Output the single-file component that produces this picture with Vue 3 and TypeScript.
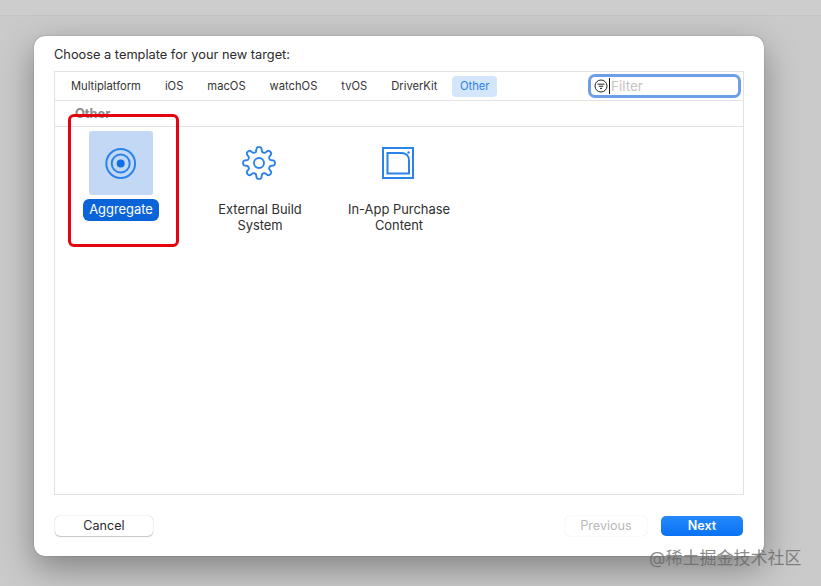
<script setup lang="ts">
const platforms = ['Multiplatform', 'iOS', 'macOS', 'watchOS', 'tvOS', 'DriverKit', 'Other'];
const templates = [
  { name: 'Aggregate', lines: ['Aggregate'], icon: 'target' },
  { name: 'External Build System', lines: ['External Build', 'System'], icon: 'gear' },
  { name: 'In-App Purchase Content', lines: ['In-App Purchase', 'Content'], icon: 'box' },
];
const selected = 'Aggregate';

// outline of the gear: 8 rounded teeth around the centre
const gearPath = (() => {
  const pts: string[] = [];
  for (let i = 0; i < 240; i++) {
    const a = (i / 240) * Math.PI * 2;
    const r = 13.6 + 2.3 * (Math.tanh(2 * Math.cos(8 * a)) / Math.tanh(2));
    pts.push(`${(17 + r * Math.sin(a)).toFixed(2)} ${(17 - r * Math.cos(a)).toFixed(2)}`);
  }
  return `M${pts.join('L')}Z`;
})();
</script>

<template>
  <div class="screen">
    <div class="topbar"></div>
    <div class="dialog">
      <div class="heading">Choose a template for your new target:</div>
      <div class="panel">
        <div class="tabs">
          <span v-for="p in platforms" :key="p" class="tab" :class="{ active: p === 'Other' }">{{ p }}</span>
          <div class="filter">
            <svg class="filter-icon" width="14" height="14" viewBox="0 0 14 14" fill="none" stroke="#222" stroke-width="1">
              <circle cx="7" cy="7" r="6" />
              <path d="M3.5 5.2h7M4.8 7.3h4.4M6 9.4h2" />
            </svg>
            <span class="caret"></span>
            <span class="placeholder">Filter</span>
          </div>
        </div>
        <div class="section">Other</div>
        <div class="grid">
          <div v-for="t in templates" :key="t.name" class="item">
            <div class="tile" :class="{ selected: t.name === selected }">
              <svg v-if="t.icon === 'target'" width="32" height="32" viewBox="0 0 32 32" fill="none" stroke="#2b83ea" stroke-width="2">
                <circle cx="15.7" cy="16.5" r="14.4" />
                <circle cx="15.7" cy="16.5" r="9" />
                <circle cx="15.7" cy="16.5" r="4" fill="#1071e5" stroke="none" />
              </svg>
              <svg v-else-if="t.icon === 'gear'" class="shift" width="34" height="34" viewBox="0 0 34 34" fill="none" stroke="#2b83ea" stroke-width="1.9" stroke-linejoin="round">
                <path :d="gearPath" />
                <circle cx="17" cy="17" r="5" />
              </svg>
              <svg v-else class="shift" width="32" height="32" viewBox="0 0 32 32" fill="none" stroke="#2b83ea" stroke-width="2">
                <rect x="1" y="1" width="30" height="30" />
                <path d="M5.5 6h14c4.500 0 7.500 3 7.500 7.500V26.500H5.500z" />
                <circle cx="26.500" cy="5.500" r="1.200" fill="#2b83ea" stroke="none" />
              </svg>
            </div>
            <div class="label" :class="{ selected: t.name === selected }">
              <div v-for="line in t.lines" :key="line">{{ line }}</div>
            </div>
          </div>
        </div>
      </div>
      <div class="actions">
        <button class="btn">Cancel</button>
        <div class="right">
          <button class="btn disabled">Previous</button>
          <button class="btn primary">Next</button>
        </div>
      </div>
    </div>
    <div class="redbox"></div>
    <div class="watermark">@稀土掘金技术社区</div>
  </div>
</template>

<style>
html, body {
  margin: 0;
  overflow: hidden;
}
</style>

<style scoped>
.screen {
  position: relative;
  width: 821px;
  height: 586px;
  overflow: hidden;
  box-sizing: border-box;
  padding-top: 36px;
  background: #cacaca;
  font-family: Inter, "Liberation Sans", "Noto Sans CJK SC", sans-serif;
}

.topbar {
  position: absolute;
  left: 0;
  right: 0;
  top: 0;
  height: 15px;
  background: #cdcdcd;
  border-bottom: 1px solid #c3c3c3;
}

.dialog {
  position: relative;
  box-sizing: border-box;
  width: 730px;
  height: 520px;
  margin-left: 34px;
  padding: 11px 20px 0;
  background: #fff;
  border-radius: 11px;
  box-shadow: 0 0 1px rgba(0, 0, 0, 0.6), 0 12px 34px rgba(0, 0, 0, 0.36);
}

.heading {
  height: 24px;
  font-size: 12.8px;
  line-height: 15px;
  color: #2a2a2a;
}

.panel {
  box-sizing: border-box;
  height: 424px;
  border: 1px solid #e2e2e2;
}

.tabs {
  display: flex;
  align-items: center;
  height: 28px;
  padding-left: 4px;
  border-bottom: 1px solid #e2e2e2;
}

.tab {
  padding: 0 12px;
  font-size: 11.2px;
  line-height: 21px;
  color: #333;
  border-radius: 4px;
}

.tab.active {
  padding: 0 7.500px;
  margin-left: 3px;
  color: #2b83ea;
  background: #d3e6fb;
}

.filter {
  display: flex;
  align-items: center;
  box-sizing: border-box;
  width: 153px;
  height: 24px;
  margin-left: auto;
  margin-right: 2px;
  padding-left: 3px;
  border: 3px solid #6d9fe6;
  border-radius: 7px;
}

.filter-icon {
  flex: none;
}

.caret {
  width: 1px;
  height: 16px;
  margin-left: 1px;
  background: #111;
}

.placeholder {
  margin-left: 1px;
  font-size: 13.5px;
  color: #c4c4c4;
}

.section {
  box-sizing: border-box;
  height: 26px;
  padding: 6px 0 0 20px;
  font-size: 12.8px;
  font-weight: 700;
  line-height: 14px;
  color: #8b8b8b;
  border-bottom: 1px solid #e2e2e2;
}

.grid {
  display: grid;
  grid-template-columns: repeat(3, 132px);
  gap: 7px;
  padding-top: 4px;
}

.item {
  display: flex;
  flex-direction: column;
  align-items: center;
}

.tile {
  display: flex;
  align-items: center;
  justify-content: center;
  width: 64px;
  height: 64px;
  border-radius: 3px;
}

.tile.selected {
  background: #c2d8f5;
}

.shift {
  transform: translateX(-1px);
}

.label {
  margin-top: 4px;
  padding: 3px 6px;
  font-size: 12.9px;
  line-height: 16px;
  text-align: center;
  color: #2f2f2f;
  border-radius: 6px;
}

.label.selected {
  color: #fff;
  background: #0a64d8;
}

.actions {
  display: flex;
  justify-content: space-between;
  margin-top: 21px;
  padding: 0 1px;
}

.right {
  display: flex;
  gap: 14px;
}

.btn {
  box-sizing: border-box;
  width: 98px;
  height: 20px;
  padding: 0 0 2px;
  font-family: inherit;
  font-size: 12.6px;
  color: #2a2a2a;
  background: #fff;
  border: none;
  border-radius: 5px;
  box-shadow: 0 0 1px rgba(0, 0, 0, 0.35), 0 1px 1px rgba(0, 0, 0, 0.2);
}

.btn.disabled {
  width: 82px;
  color: #b9b9b9;
  box-shadow: 0 0 1px rgba(0, 0, 0, 0.2);
}

.btn.primary {
  width: 82px;
  font-weight: 600;
  color: #fff;
  background: linear-gradient(#2589fb, #0a72f4);
  box-shadow: none;
}

.redbox {
  position: absolute;
  left: 68px;
  top: 114px;
  width: 111px;
  height: 133px;
  box-sizing: border-box;
  border: 3px solid #e3040f;
  border-radius: 6px;
}

.watermark {
  position: absolute;
  left: 649px;
  top: 547px;
  font-size: 17px;
  line-height: 22px;
  white-space: nowrap;
  color: rgba(100, 100, 100, 0.75);
}
</style>
